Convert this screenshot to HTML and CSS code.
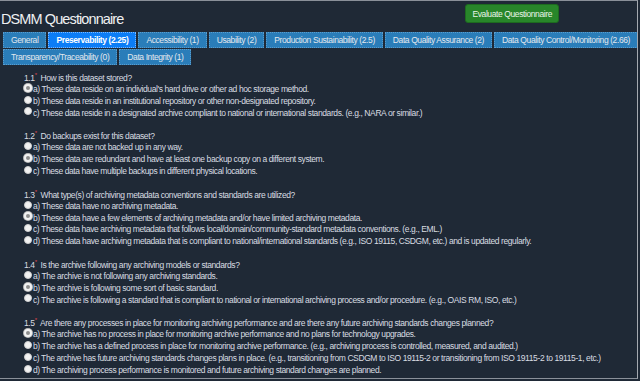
FILE: index.html
```html
<!DOCTYPE html>
<html lang="en">
<head>
    <meta charset="UTF-8">
    <meta name="viewport" content="width=device-width, initial-scale=1.0">
    <title>DSMM Questionnaire</title>
    <link rel="stylesheet" href="styles.css">
</head>
<body>
    <div class="frame">
        <div class="header">
            <h1>DSMM Questionnaire</h1>
            <button class="evaluate">Evaluate Questionnaire</button>
        </div>

        <div class="tabs">
            <div class="tab-row">
                <button class="tab">General</button>
                <button class="tab active">Preservability (2.25)</button>
                <button class="tab">Accessibility (1)</button>
                <button class="tab">Usability (2)</button>
                <button class="tab">Production Sustainability (2.5)</button>
                <button class="tab">Data Quality Assurance (2)</button>
                <button class="tab">Data Quality Control/Monitoring (2.66)</button>
            </div>
            <div class="tab-row">
                <button class="tab">Transparency/Traceability (0)</button>
                <button class="tab">Data Integrity (1)</button>
            </div>
        </div>

        <div class="questions">
            <div class="question">
                <p class="q-title">1.1<sup>*</sup> How is this dataset stored?</p>
                <label><input type="radio" name="q11" checked>a) These data reside on an individual's hard drive or other ad hoc storage method.</label>
                <label><input type="radio" name="q11">b) These data reside in an institutional repository or other non-designated repository.</label>
                <label><input type="radio" name="q11">c) These data reside in a designated archive compliant to national or international standards. (e.g., NARA or similar.)</label>
            </div>

            <div class="question">
                <p class="q-title">1.2<sup>*</sup> Do backups exist for this dataset?</p>
                <label><input type="radio" name="q12">a) These data are not backed up in any way.</label>
                <label><input type="radio" name="q12" checked>b) These data are redundant and have at least one backup copy on a different system.</label>
                <label><input type="radio" name="q12">c) These data have multiple backups in different physical locations.</label>
            </div>

            <div class="question">
                <p class="q-title">1.3<sup>*</sup> What type(s) of archiving metadata conventions and standards are utilized?</p>
                <label><input type="radio" name="q13">a) These data have no archiving metadata.</label>
                <label><input type="radio" name="q13" checked>b) These data have a few elements of archiving metadata and/or have limited archiving metadata.</label>
                <label><input type="radio" name="q13">c) These data have archiving metadata that follows local/domain/community-standard metadata conventions. (e.g., EML.)</label>
                <label><input type="radio" name="q13">d) These data have archiving metadata that is compliant to national/international standards (e.g., ISO 19115, CSDGM, etc.) and is updated regularly.</label>
            </div>

            <div class="question">
                <p class="q-title">1.4<sup>*</sup> Is the archive following any archiving models or standards?</p>
                <label><input type="radio" name="q14">a) The archive is not following any archiving standards.</label>
                <label><input type="radio" name="q14" checked>b) The archive is following some sort of basic standard.</label>
                <label><input type="radio" name="q14">c) The archive is following a standard that is compliant to national or international archiving process and/or procedure. (e.g., OAIS RM, ISO, etc.)</label>
            </div>

            <div class="question">
                <p class="q-title">1.5<sup>*</sup> Are there any processes in place for monitoring archiving performance and are there any future archiving standards changes planned?</p>
                <label><input type="radio" name="q15" checked>a) The archive has no process in place for monitoring archive performance and no plans for technology upgrades.</label>
                <label><input type="radio" name="q15">b) The archive has a defined process in place for monitoring archive performance. (e.g., archiving process is controlled, measured, and audited.)</label>
                <label><input type="radio" name="q15">c) The archive has future archiving standards changes plans in place. (e.g., transitioning from CSDGM to ISO 19115-2 or transitioning from ISO 19115-2 to 19115-1, etc.)</label>
                <label><input type="radio" name="q15">d) The archiving process performance is monitored and future archiving standard changes are planned.</label>
            </div>
        </div>
    </div>
</body>
</html>
```

FILE: styles.css
```css
* {
    box-sizing: border-box;
}

html, body {
    margin: 0;
    padding: 0;
    height: 100%;
    background-color: #1f2936;
}

body {
    font-family: "Liberation Sans", Arial, sans-serif;
    color: #d9dde2;
}

.frame {
    height: 379px;
    width: 638px;
    border-top: 1px solid #8a9099;
    border-right: 1px solid #a4a9b0;
    border-bottom: 1px solid #8a9099;
    overflow: hidden;
}

.header {
    display: flex;
    align-items: flex-start;
    justify-content: space-between;
    padding: 3px 78px 0 1px;
    height: 31px;
}

.header h1 {
    margin: 7px 0 0;
    font-size: 14.5px;
    font-weight: normal;
    letter-spacing: -0.9px;
    color: #eef0f2;
}

.evaluate {
    font-family: inherit;
    font-size: 8.5px;
    letter-spacing: -0.4px;
    color: #e8f3e8;
    background-color: #28862a;
    border: 1px solid #1d6b1f;
    border-radius: 3px;
    padding: 0 6px;
    height: 19px;
}

/* Barra de abas */
.tabs {
    display: flex;
    flex-direction: column;
    gap: 1px;
    padding: 0 0 0 3px;
}

.tab-row {
    display: flex;
    gap: 2px;
}

.tab {
    flex: none;
    font-family: inherit;
    font-size: 8.5px;
    letter-spacing: -0.4px;
    color: #e3e8ee;
    background-color: #2a7db9;
    border: 1px dotted #5a9ccc;
    padding: 0 7px;
    height: 16px;
    white-space: nowrap;
}

.tab.active {
    background-color: #0c7df6;
    border-color: #7ab8ff;
    color: #fff;
    font-weight: bold;
}

.questions {
    padding: 7px 0 0 24px;
}

.question {
    margin-bottom: 11px;
}

.q-title {
    margin: 0;
    height: 12px;
    font-size: 8.5px;
    line-height: 12px;
    letter-spacing: -0.4px;
    white-space: nowrap;
}

.q-title sup {
    color: #e0474c;
    font-size: 6px;
    line-height: 0;
    vertical-align: baseline;
    position: relative;
    top: -4px;
    margin-right: 2px;
}

label {
    display: flex;
    align-items: center;
    height: 11.8px;
    font-size: 8.5px;
    line-height: 11.8px;
    letter-spacing: -0.4px;
    white-space: nowrap;
}

input[type=radio] {
    -webkit-appearance: none;
    appearance: none;
    flex: none;
    width: 8px;
    height: 8px;
    margin: 0 1px 0 0;
    border-radius: 50%;
    background-color: #f2f2f2;
    border: 1px solid #cfcfcf;
    position: relative;
    top: -2px;
}

input[type=radio]:checked {
    border: 2px solid #f2f2f2;
    background-color: #8c8c8c;
    box-shadow: 0 0 0 1px #bbb;
}
```
